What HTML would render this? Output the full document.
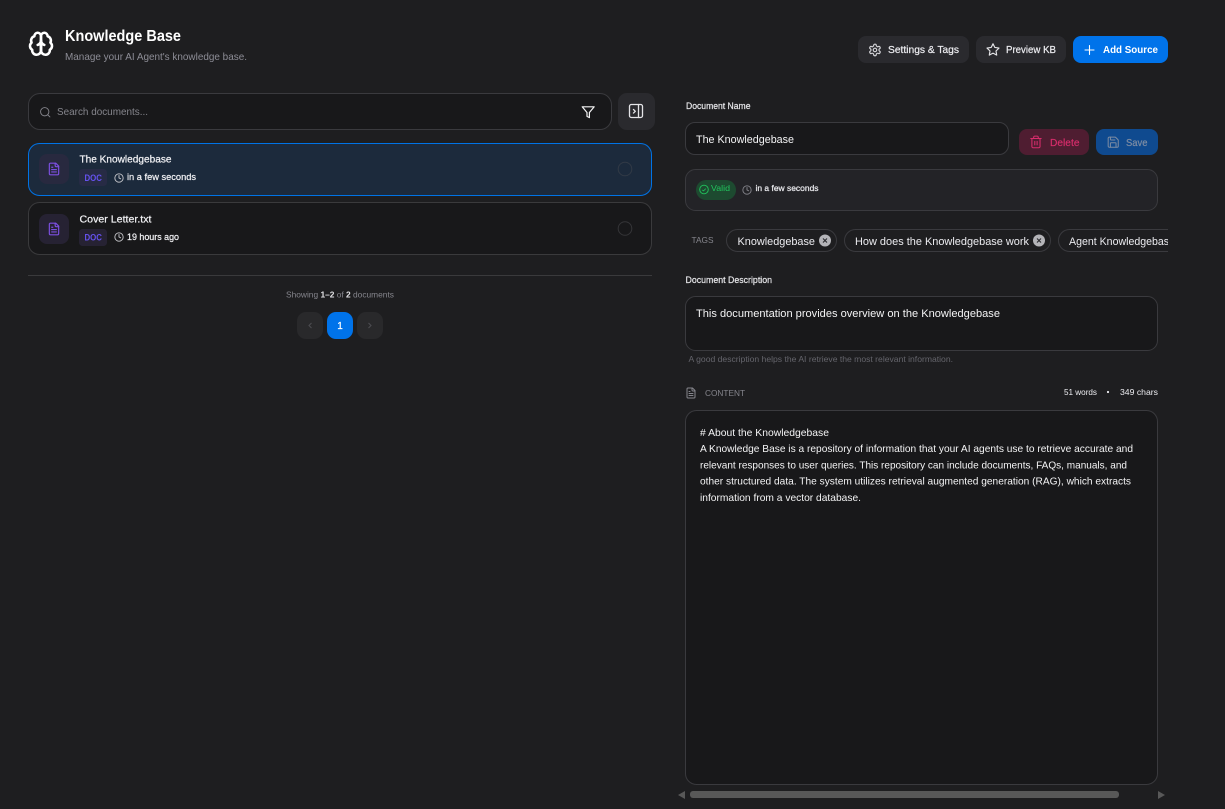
<!DOCTYPE html>
<html lang="en"><head><meta charset="utf-8"><title>Knowledge Base</title>
<style>
html,body{margin:0;padding:0;background:#1e1e20;width:1225px;height:809px;overflow:hidden}
svg{display:block}
text{font-family:"Liberation Sans",sans-serif;white-space:pre}
.ic{fill:none;stroke-linecap:round;stroke-linejoin:round}
.m{stroke:currentColor;stroke-width:.22}
</style></head><body>
<svg width="1225" height="809" viewBox="0 0 1225 809" xmlns="http://www.w3.org/2000/svg">
<defs>
<symbol id="file" viewBox="0 0 24 24"><g class="ic" stroke="currentColor" stroke-width="2"><path d="M15 2H6a2 2 0 0 0-2 2v16a2 2 0 0 0 2 2h12a2 2 0 0 0 2-2V7Z"/><path d="M14 2v4a2 2 0 0 0 2 2h4"/><path d="M10 9H8"/><path d="M16 13H8"/><path d="M16 17H8"/></g></symbol>
<symbol id="clock" viewBox="0 0 24 24"><g class="ic" stroke="currentColor" stroke-width="2.200"><circle cx="12" cy="12" r="10"/><polyline points="12 6 12 12 16 14"/></g></symbol>
<clipPath id="tagclip"><rect x="700" y="225" width="468" height="32"/></clipPath>
</defs>

<rect width="1225" height="809" fill="#1e1e20"/>

<!-- Header -->
<g class="ic" stroke="#fff" stroke-width="2.300" transform="translate(27.800 30.600) scale(1.1)">
<path d="M12 5a3 3 0 1 0-5.997.125 4 4 0 0 0-2.526 5.77 4 4 0 0 0 .556 6.588A4 4 0 1 0 12 18Z"/>
<path d="M12 5a3 3 0 1 1 5.997.125 4 4 0 0 1 2.526 5.77 4 4 0 0 1-.556 6.588A4 4 0 1 1 12 18Z"/>
<path d="M15 13a4.500 4.500 0 0 1-3-4 4.500 4.500 0 0 1-3 4"/>
<path d="M12 9v9"/>
</g>
<text x="65" y="41" font-size="15.500" font-weight="700" fill="#fff" textLength="116" lengthAdjust="spacingAndGlyphs">Knowledge Base</text>
<text x="65" y="60" font-size="10.500" fill="#8d8d96" textLength="182" lengthAdjust="spacingAndGlyphs">Manage your AI Agent's knowledge base.</text>

<rect x="858" y="36" width="111" height="27" rx="8" fill="#2a2a2e"/>
<g class="ic" stroke="#d4d4d8" stroke-width="2" transform="translate(868 43) scale(.58)">
<path d="M12.220 2h-.44a2 2 0 0 0-2 2v.18a2 2 0 0 1-1 1.730l-.43.25a2 2 0 0 1-2 0l-.15-.08a2 2 0 0 0-2.730.73l-.22.38a2 2 0 0 0 .73 2.730l.15.1a2 2 0 0 1 1 1.720v.51a2 2 0 0 1-1 1.740l-.15.09a2 2 0 0 0-.73 2.730l.22.38a2 2 0 0 0 2.730.73l.15-.08a2 2 0 0 1 2 0l.43.25a2 2 0 0 1 1 1.730V20a2 2 0 0 0 2 2h.44a2 2 0 0 0 2-2v-.18a2 2 0 0 1 1-1.730l.43-.25a2 2 0 0 1 2 0l.15.08a2 2 0 0 0 2.730-.73l.22-.39a2 2 0 0 0-.73-2.730l-.15-.08a2 2 0 0 1-1-1.740v-.5a2 2 0 0 1 1-1.740l.15-.09a2 2 0 0 0 .73-2.730l-.22-.38a2 2 0 0 0-2.730-.73l-.15.08a2 2 0 0 1-2 0l-.43-.25a2 2 0 0 1-1-1.730V4a2 2 0 0 0-2-2z"/>
<circle cx="12" cy="12" r="3"/></g>
<text class="m" x="888" y="53" font-size="10.500" fill="#ececf0" color="#ececf0" textLength="71" lengthAdjust="spacingAndGlyphs">Settings &amp; Tags</text>

<rect x="976" y="36" width="90" height="27" rx="8" fill="#2a2a2e"/>
<g class="ic" stroke="#e4e4e7" stroke-width="1.900" transform="translate(985.800 42.500) scale(.6)"><polygon points="12 2 15.090 8.260 22 9.270 17 14.140 18.180 21.020 12 17.770 5.820 21.020 7 14.140 2 9.270 8.910 8.260 12 2"/></g>
<text class="m" x="1006" y="53" font-size="10.500" fill="#ececf0" color="#ececf0" textLength="50" lengthAdjust="spacingAndGlyphs">Preview KB</text>

<rect x="1073" y="36" width="95" height="27" rx="8" fill="#0073ea"/>
<path d="M1089.500 45.500v9M1085 50h9" stroke="#fff" stroke-width="1.100" stroke-linecap="round"/>
<text x="1103" y="53" font-size="10.500" font-weight="700" fill="#fff" textLength="55" lengthAdjust="spacingAndGlyphs">Add Source</text>

<!-- Search -->
<rect x="28.500" y="93.500" width="583" height="36" rx="11.500" fill="#18181a" stroke="#3a3a3e"/>
<g class="ic" stroke="#85858c" stroke-width="1.800" transform="translate(39 106) scale(.52)"><circle cx="11" cy="11" r="8"/><path d="m21 21-4.300-4.300"/></g>
<text x="57" y="115" font-size="10.500" fill="#85858c" textLength="91" lengthAdjust="spacingAndGlyphs">Search documents...</text>
<g class="ic" stroke="#f4f4f5" stroke-width="2" transform="translate(581 105) scale(.6)"><polygon points="22 3 2 3 10 12.460 10 19 14 21 14 12.460 22 3"/></g>

<rect x="618" y="93" width="37" height="37" rx="9" fill="#2a2a2e"/>
<g class="ic" stroke="#e4e4e7" stroke-width="1.300"><rect x="629.500" y="104.500" width="13" height="13" rx="1.800"/><path d="M638.500 104.500v13"/><path d="m633.500 109.500 1.800 1.800-1.800 1.800"/></g>

<!-- Doc cards -->
<rect x="28.500" y="143.500" width="623" height="52" rx="11" fill="#1c2a3c" stroke="#0073e6"/>
<rect x="39" y="154" width="30" height="30" rx="8" fill="#28293f"/>
<use href="#file" x="47" y="162" width="14" height="14" color="#7c4fe0"/>
<text class="m" x="79.500" y="162.500" font-size="10.500" fill="#f2f2f5" color="#f2f2f5" textLength="92" lengthAdjust="spacingAndGlyphs">The Knowledgebase</text>
<rect x="79" y="169" width="28" height="17" rx="3.500" fill="#272b45"/>
<text x="84.500" y="181" font-size="8.800" font-weight="700" fill="#6652f0" textLength="17.500" lengthAdjust="spacingAndGlyphs">DOC</text>
<use href="#clock" x="114" y="173" width="10" height="10" color="#c8c8cc"/>
<text class="m" x="127" y="180" font-size="9.500" fill="#f2f2f5" color="#f2f2f5" textLength="69" lengthAdjust="spacingAndGlyphs">in a few seconds</text>
<circle cx="625" cy="169" r="6.800" fill="none" stroke="#323a46"/>

<rect x="28.500" y="202.500" width="623" height="52" rx="11" fill="#18181a" stroke="#3a3a3c"/>
<rect x="39" y="214" width="30" height="30" rx="8" fill="#262233"/>
<use href="#file" x="47" y="222" width="14" height="14" color="#7c4fe0"/>
<text class="m" x="79.500" y="222.500" font-size="10.500" fill="#f2f2f5" color="#f2f2f5" textLength="72" lengthAdjust="spacingAndGlyphs">Cover Letter.txt</text>
<rect x="79" y="229" width="28" height="17" rx="3.500" fill="#262233"/>
<text x="84.500" y="240.500" font-size="8.800" font-weight="700" fill="#6652f0" textLength="17.500" lengthAdjust="spacingAndGlyphs">DOC</text>
<use href="#clock" x="114" y="232" width="10" height="10" color="#c8c8cc"/>
<text class="m" x="127" y="240" font-size="9.500" fill="#f2f2f5" color="#f2f2f5" textLength="52" lengthAdjust="spacingAndGlyphs">19 hours ago</text>
<circle cx="625" cy="228.500" r="6.800" fill="none" stroke="#353538"/>

<!-- Pagination -->
<rect x="28" y="275" width="624" height="1" fill="#3a3a3c"/>
<text x="286" y="297.500" font-size="8.600" fill="#85858c" textLength="108" lengthAdjust="spacingAndGlyphs">Showing <tspan font-weight="700" fill="#e4e4e7">1–2</tspan> of <tspan font-weight="700" fill="#e4e4e7">2</tspan> documents</text>
<rect x="297" y="312" width="26" height="27" rx="9" fill="#29292b"/>
<path d="m311.500 323-2.500 2.500 2.500 2.500" fill="none" stroke="#4c4c50" stroke-width="1.100"/>
<rect x="327" y="312" width="26" height="27" rx="9" fill="#0073ea"/>
<text x="340" y="329" font-size="10" font-weight="400" fill="#fff" stroke="#fff" stroke-width=".2" text-anchor="middle">1</text>
<rect x="357" y="312" width="26" height="27" rx="9" fill="#29292b"/>
<path d="m368.500 323 2.500 2.500-2.500 2.500" fill="none" stroke="#4c4c50" stroke-width="1.100"/>

<!-- Right: document name -->
<text class="m" x="686" y="109" font-size="8.800" fill="#e4e4e7" color="#e4e4e7" textLength="64.500" lengthAdjust="spacingAndGlyphs">Document Name</text>
<rect x="685.500" y="122.500" width="323" height="32" rx="9.500" fill="#18181a" stroke="#3a3a3e"/>
<text x="696" y="143" font-size="11" fill="#f4f4f5" textLength="98" lengthAdjust="spacingAndGlyphs">The Knowledgebase</text>

<rect x="1019" y="129" width="70" height="26" rx="8" fill="#4f1d31"/>
<g class="ic" stroke="#d92d6c" stroke-width="1.800" transform="translate(1029 135) scale(.58)"><path d="M3 6h18"/><path d="M19 6v14c0 1-1 2-2 2H7c-1 0-2-1-2-2V6"/><path d="M8 6V4c0-1 1-2 2-2h4c1 0 2 1 2 2v2"/><line x1="10" x2="10" y1="11" y2="17"/><line x1="14" x2="14" y1="11" y2="17"/></g>
<text x="1050" y="146" font-size="10.500" fill="#d92d6c" stroke="#d92d6c" stroke-width=".15" textLength="29.500" lengthAdjust="spacingAndGlyphs">Delete</text>

<rect x="1096" y="129" width="62" height="26" rx="8" fill="#0f4a8f"/>
<g class="ic" stroke="#7d8ca3" stroke-width="1.800" transform="translate(1106.500 135.500) scale(.56)"><path d="M15.200 3a2 2 0 0 1 1.400.6l3.800 3.800a2 2 0 0 1 .6 1.400V19a2 2 0 0 1-2 2H5a2 2 0 0 1-2-2V5a2 2 0 0 1 2-2z"/><path d="M17 21v-7a1 1 0 0 0-1-1H8a1 1 0 0 0-1 1v7"/><path d="M7 3v4a1 1 0 0 0 1 1h7"/></g>
<text class="m" x="1126" y="146" font-size="10.500" fill="#7d8ca3" color="#7d8ca3" textLength="21.500" lengthAdjust="spacingAndGlyphs">Save</text>

<!-- Status -->
<rect x="685.500" y="169.500" width="472" height="41" rx="10" fill="#232327" stroke="#3a3a3e"/>
<rect x="696" y="180" width="40" height="20" rx="10" fill="#1d4a30"/>
<circle cx="704" cy="189.500" r="4.300" fill="none" stroke="#22c55e" stroke-width=".9"/>
<path d="m702.300 190 1.200 .9 2.300-2.300" fill="none" stroke="#22c55e" stroke-width=".8"/>
<text x="711" y="191" font-size="8.600" fill="#22c55e" textLength="19" lengthAdjust="spacingAndGlyphs">Valid</text>
<use href="#clock" x="742" y="185" width="10" height="10" color="#85858c"/>
<text class="m" x="755.500" y="191" font-size="8.600" fill="#ececf0" color="#ececf0" textLength="63" lengthAdjust="spacingAndGlyphs">in a few seconds</text>

<!-- Tags -->
<text x="691.500" y="243" font-size="8.400" fill="#85858c" textLength="22" lengthAdjust="spacingAndGlyphs">TAGS</text>
<g clip-path="url(#tagclip)">
<rect x="726.500" y="229.500" width="110" height="22" rx="11" fill="#1e1e20" stroke="#3a3a3e"/>
<text x="737.500" y="245" font-size="11" fill="#ececf0" textLength="77.500" lengthAdjust="spacingAndGlyphs">Knowledgebase</text>
<circle cx="825" cy="240.500" r="6" fill="#b4b4b8"/>
<path d="m823 238.500 4 4m0-4-4 4" stroke="#2a2a2e" stroke-width="1.100"/>
<rect x="844.500" y="229.500" width="206" height="22" rx="11" fill="#1e1e20" stroke="#3a3a3e"/>
<text x="855" y="245" font-size="11" fill="#ececf0" textLength="174" lengthAdjust="spacingAndGlyphs">How does the Knowledgebase work</text>
<circle cx="1039" cy="240.500" r="6" fill="#b4b4b8"/>
<path d="m1037 238.500 4 4m0-4-4 4" stroke="#2a2a2e" stroke-width="1.100"/>
<rect x="1058.500" y="229.500" width="150" height="22" rx="11" fill="#1e1e20" stroke="#3a3a3e"/>
<text x="1069" y="245" font-size="11" fill="#ececf0" textLength="106" lengthAdjust="spacingAndGlyphs">Agent Knowledgebase</text>
</g>

<!-- Description -->
<text class="m" x="685.500" y="283" font-size="8.800" fill="#e4e4e7" color="#e4e4e7" textLength="86.500" lengthAdjust="spacingAndGlyphs">Document Description</text>
<rect x="685.500" y="296.500" width="472" height="54" rx="10" fill="#18181a" stroke="#3a3a3e"/>
<text x="696" y="317" font-size="11" fill="#f4f4f5" textLength="304" lengthAdjust="spacingAndGlyphs">This documentation provides overview on the Knowledgebase</text>
<text x="688.500" y="362" font-size="8.400" fill="#65656c" textLength="264.500" lengthAdjust="spacingAndGlyphs">A good description helps the AI retrieve the most relevant information.</text>

<!-- Content -->
<use href="#file" x="685" y="387" width="12" height="12" color="#85858c"/>
<text x="705" y="396" font-size="8.400" fill="#85858c" textLength="40" lengthAdjust="spacingAndGlyphs">CONTENT</text>
<text x="1064" y="395" font-size="8.400" fill="#ececf0" textLength="33" lengthAdjust="spacingAndGlyphs">51 words</text>
<circle cx="1108" cy="392" r="1.100" fill="#ececf0"/>
<text x="1120" y="395" font-size="8.400" fill="#ececf0" textLength="38" lengthAdjust="spacingAndGlyphs">349 chars</text>

<rect x="685.500" y="410.500" width="472" height="374" rx="11" fill="#18181a" stroke="#3a3a3e"/>
<g font-size="10.500" fill="#f4f4f5">
<text x="700" y="436" textLength="129" lengthAdjust="spacingAndGlyphs"># About the Knowledgebase</text>
<text x="700" y="452" textLength="433" lengthAdjust="spacingAndGlyphs">A Knowledge Base is a repository of information that your AI agents use to retrieve accurate and</text>
<text x="700" y="468.500" textLength="427" lengthAdjust="spacingAndGlyphs">relevant responses to user queries. This repository can include documents, FAQs, manuals, and</text>
<text x="700" y="484.500" textLength="431" lengthAdjust="spacingAndGlyphs">other structured data. The system utilizes retrieval augmented generation (RAG), which extracts</text>
<text x="700" y="501" textLength="161" lengthAdjust="spacingAndGlyphs">information from a vector database.</text>
</g>

<!-- Scrollbar -->
<rect x="690" y="791" width="429" height="7" rx="3" fill="#585858"/>
<polygon points="685,791 685,799 678,795" fill="#585858"/>
<polygon points="1158,791 1158,799 1165,795" fill="#585858"/>
</svg>
</body></html>
